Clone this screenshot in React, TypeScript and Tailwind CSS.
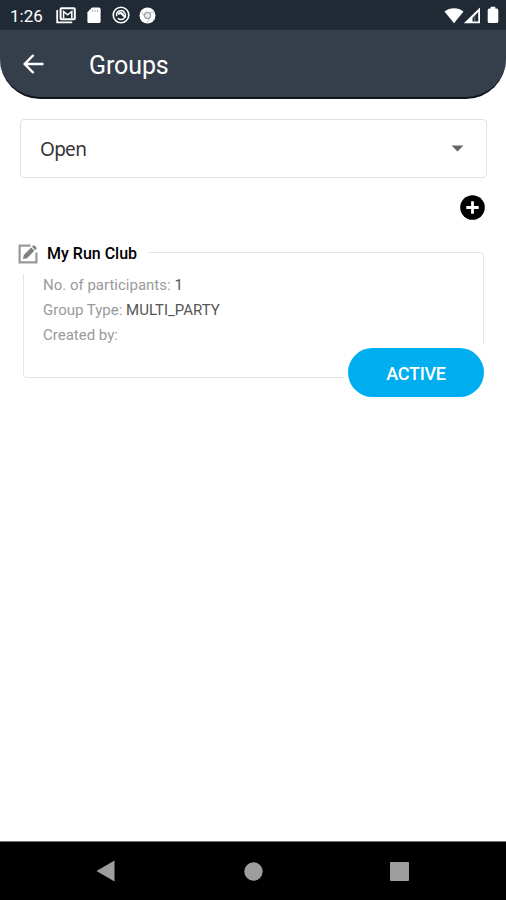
import React from 'react'

interface Group {
    name: string;
    participants: number;
    type: string;
    createdBy: string;
    status: string;
}

const groups: Group[] = [
    { name: 'My Run Club', participants: 1, type: 'MULTI_PARTY', createdBy: '', status: 'ACTIVE' },
];

const StatusBar: React.FC = () => {
    return (
        <div className="flex h-[30px] items-center justify-between bg-[#1f2a35] pr-[7px] pl-[10px] text-white">
            <div className="flex items-center">
                <span className="w-[46px] pt-[2px] text-[17px] leading-[28px]">1:26</span>
                <svg className="mr-[11px] h-[17px] w-[20px]" viewBox="0 0 20 17" fill="none">
                    <path d="M1.200 3v12.400h15" stroke="#fff" strokeWidth="1.800" />
                    <rect x="4.600" y="1.200" width="14.200" height="11" rx=".8" stroke="#fff" strokeWidth="2" />
                    <path d="M7.600 11V4.500l4.100 3.300 4.100-3.300V11" stroke="#fff" strokeWidth="1.500" />
                </svg>
                <svg className="mr-[11px] h-[17px] w-[14px]" viewBox="0 0 14 17">
                    <path d="M5 .5h7a1.600 1.600 0 0 1 1.600 1.600v12.300A1.600 1.600 0 0 1 12 16H2A1.600 1.600 0 0 1 .4 14.400V5.200z" fill="#fff" />
                    <path d="M5.300 2.500v2.600M7.900 2.500v2.600M10.500 2.500v2.600" stroke="#a3abb2" strokeWidth=".9" />
                </svg>
                <svg className="mr-[9px] h-[18px] w-[18px]" viewBox="0 0 18 18" fill="none" stroke="#fff">
                    <circle cx="9" cy="9" r="7.800" strokeWidth="1.600" />
                    <path d="M4.700 10.200A4.500 4.500 0 0 1 12.800 6.600M12.300 12.200A4.500 4.500 0 0 1 5.800 12.200" strokeWidth="1.500" />
                    <path d="M6 8l3-1.200 4.600 5" strokeWidth="2.200" />
                    <path d="M11.500 6.500l2 1.500v2.500" strokeWidth="1.200" />
                </svg>
                <svg className="h-[17px] w-[17px]" viewBox="0 0 17 17">
                    <circle cx="8.500" cy="8.500" r="8" fill="#fff" />
                    <circle cx="8.500" cy="8.500" r="3.200" fill="#e5e7e9" stroke="#7b848c" strokeWidth="1" />
                    <path d="M8.500 5.300h6.500M5.700 10.100L2.700 4.900M11.300 10.100L8.200 15.600" stroke="#a9afb5" strokeWidth=".8" />
                </svg>
            </div>
            <div className="flex items-center">
                <svg className="h-[17px] w-[20px]" viewBox="0 0 20 17">
                    <path d="M.5 4.600C5.500.1 14.500.1 19.500 4.600L10 16.300z" fill="#fff" />
                </svg>
                <svg className="ml-[-1px] h-[17px] w-[18px]" viewBox="0 0 18 17">
                    <path d="M17 .5V16.300H.8z" fill="#fff" />
                    <path d="M15.200 5v9.500H9.500V11z" fill="#1f2a35" />
                    <path d="M11.800 9.500V14.500H15.200" stroke="#9da4ab" strokeWidth=".7" fill="none" />
                </svg>
                <svg className="ml-[6px] h-[18px] w-[12px]" viewBox="0 0 12 18">
                    <path d="M3.700 .7h4.600v1.800h1.500a1.500 1.500 0 0 1 1.500 1.500v11.500a1.500 1.500 0 0 1-1.500 1.500H2.200a1.500 1.500 0 0 1-1.500-1.500V4a1.500 1.500 0 0 1 1.500-1.500h1.500z" fill="#fff" />
                </svg>
            </div>
        </div>
    )
}

const Header: React.FC = () => {
    return (
        <header className="flex h-[69px] items-center rounded-b-[40px] border-b-2 border-[#10151f] bg-[#353f4b] pl-[23px] text-white">
            <svg className="h-[20px] w-[21px]" viewBox="0 0 21 20" fill="none" stroke="#fff" strokeWidth="2.500">
                <path d="M10.500 1L1.700 10l8.800 9M1.700 10H20.500" />
            </svg>
            <h1 className="ml-[45px] pt-[5px] text-[25px] leading-[30px] tracking-[-0.1px]">Groups</h1>
        </header>
    )
}

const GroupCard: React.FC<{ group: Group }> = ({ group }) => {
    return (
        <div className="relative mr-[22px] ml-[23px] h-[126px] rounded-[4px] border border-[#e6e6e6] pt-[20px] pl-[19px]">
            <div className="absolute -top-[11px] -left-[6px] flex h-[32px] items-center bg-white pr-[11px] pb-[9px]">
                <svg className="h-[20px] w-[20px]" viewBox="0 0 20 20" fill="none">
                    <path d="M12.500 1.600H1.600V18.400H18.400V8.500" stroke="#999" strokeWidth="2.200" />
                    <path d="M5 15l.8-4 7.400-7.400 3.200 3.200-7.400 7.400z" fill="#808080" />
                    <path d="M14 2.800l1.200-1.200a.9.9 0 0 1 1.300 0l1.900 1.900a.9.9 0 0 1 0 1.300l-1.200 1.200z" fill="#808080" />
                </svg>
                <h2 className="ml-[9px] pt-[1px] text-[16px] leading-[22px] font-medium text-black">{group.name}</h2>
            </div>
            <div className="text-[15px] leading-[25px] text-[#9a9a9a]">
                <p>No. of participants: <span className="text-[#555]">{group.participants}</span></p>
                <p>Group Type: <span className="text-[#555]">{group.type}</span></p>
                <p>Created by: <span className="text-[#555]">{group.createdBy}</span></p>
            </div>
            <div className="absolute -right-[1px] -bottom-[20px] bg-white pt-[4px] pl-[4px]">
                <button className="block h-[49px] w-[136px] rounded-full bg-[#00aeef] pt-[2px] text-[18px] font-medium tracking-[-0.3px] text-white">
                    {group.status}
                </button>
            </div>
        </div>
    )
}

const App: React.FC = () => {
    return (
        <div className="flex h-[900px] w-[506px] flex-col bg-white font-['Roboto',sans-serif]">
            <StatusBar />
            <Header />
            <main className="flex-1">
                <div className="mr-[19px] ml-[20px] mt-[20px] flex h-[59px] items-center justify-between rounded-[4px] border border-[#e2e2e2] pr-[22px] pl-[19px]">
                    <span className="pt-[2px] font-['Noto_Sans',sans-serif] text-[19px] tracking-[-0.7px] text-[#333]">Open</span>
                    <svg className="h-[7px] w-[13px]" viewBox="0 0 13 7">
                        <path d="M.5 .5h12l-6 6z" fill="#666" />
                    </svg>
                </div>
                <div className="flex h-[74px] justify-end pt-[17px] pr-[21px]">
                    <svg className="h-[25px] w-[25px]" viewBox="0 0 25 25">
                        <circle cx="12.500" cy="12.500" r="12.300" fill="#000" />
                        <path d="M12.500 6.300v12.400M6.300 12.500h12.400" stroke="#fff" strokeWidth="2.800" />
                    </svg>
                </div>
                {groups.map((group) => (
                    <GroupCard key={group.name} group={group} />
                ))}
            </main>
            <nav className="flex h-[59px] items-center justify-between border-t border-[#777] bg-black pr-[97px] pl-[96px]">
                <svg className="h-[22px] w-[19px]" viewBox="0 0 19 22">
                    <path d="M18.500 .5v21L.5 11z" fill="#9e9e9e" />
                </svg>
                <svg className="ml-[2px] h-[19px] w-[19px]" viewBox="0 0 19 19">
                    <circle cx="9.500" cy="9.500" r="9.200" fill="#9e9e9e" />
                </svg>
                <div className="h-[19px] w-[19px] rounded-[1px] bg-[#9e9e9e]" />
            </nav>
        </div>
    )
}

export default App
